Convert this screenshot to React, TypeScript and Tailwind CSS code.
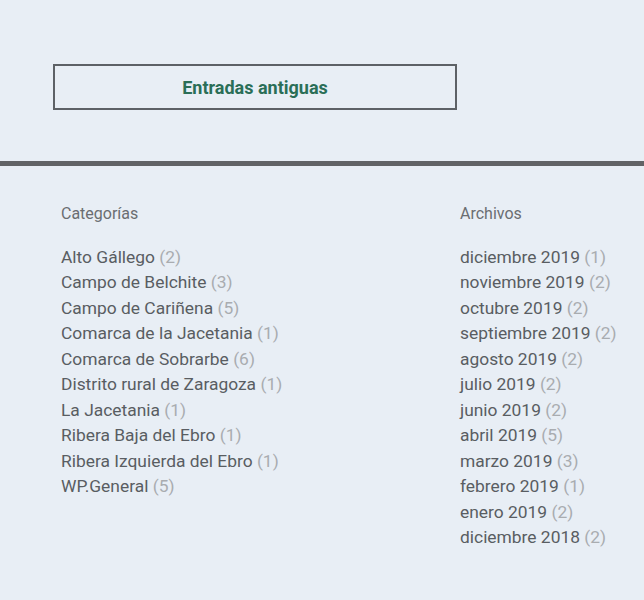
import React from "react";

const categorias = [
  ["Alto Gállego", 2],
  ["Campo de Belchite", 3],
  ["Campo de Cariñena", 5],
  ["Comarca de la Jacetania", 1],
  ["Comarca de Sobrarbe", 6],
  ["Distrito rural de Zaragoza", 1],
  ["La Jacetania", 1],
  ["Ribera Baja del Ebro", 1],
  ["Ribera Izquierda del Ebro", 1],
  ["WP.General", 5],
] as const;

const archivos = [
  ["diciembre 2019", 1],
  ["noviembre 2019", 2],
  ["octubre 2019", 2],
  ["septiembre 2019", 2],
  ["agosto 2019", 2],
  ["julio 2019", 2],
  ["junio 2019", 2],
  ["abril 2019", 5],
  ["marzo 2019", 3],
  ["febrero 2019", 1],
  ["enero 2019", 2],
  ["diciembre 2018", 2],
] as const;

const Widget: React.FC<{ title: string; items: readonly (readonly [string, number])[] }> = ({
  title,
  items,
}) => (
  <div>
    <h3 className="text-[16px] leading-[22px] text-[#6a6d71]">{title}</h3>
    <ul className="mt-[20px]">
      {items.map(([name, count]) => (
        <li key={name} className="text-[17.4px] leading-[25.45px] text-[#595d62] whitespace-nowrap">
          <a href="#">{name}</a> <span className="text-[#a9acb0]">({count})</span>
        </li>
      ))}
    </ul>
  </div>
);

const App: React.FC = () => {
  return (
    <div
      className="min-h-[600px] bg-[#e8eef5] pt-[64px]"
      style={{ fontFamily: "Roboto, 'Open Sans', sans-serif" }}
    >
      <div className="ml-[53px] w-[404px] h-[46px] border-2 border-[#5d6166] flex items-center justify-center">
        <span className="text-[18px] leading-[22px] font-bold text-[#2a6e57] translate-y-[1px]">Entradas antiguas</span>
      </div>

      <div className="mt-[51px] h-[5px] bg-[#616366]" />

      <div className="grid grid-cols-[399px_1fr] pl-[61px] pt-[37px]">
        <Widget title="Categorías" items={categorias} />
        <Widget title="Archivos" items={archivos} />
      </div>
    </div>
  );
};

export default App;
